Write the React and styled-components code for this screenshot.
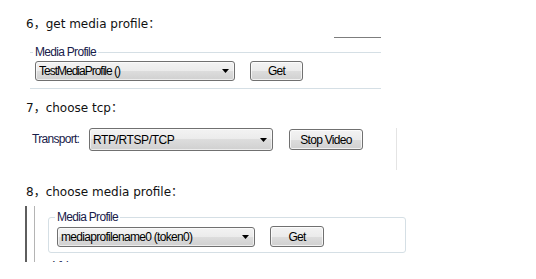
import React from "react";
import styled, { createGlobalStyle } from "styled-components";

const uiFont = `"Liberation Sans", Arial, sans-serif`;
const labelColor = "#18204a";

const Global = createGlobalStyle`
  html, body { margin: 0; padding: 0; background: #ffffff; }
  body { width: 536px; height: 279px; overflow: hidden; }
`;

const Page = styled.div`
  padding: 16px 0 0 26px;
`;

const Heading = styled.div`
  height: 16px;
  margin-top: ${(p) => p.$mt || 0}px;
  font-family: "DejaVu Sans", "Noto Sans CJK SC", sans-serif;
  font-size: 12px;
  line-height: 16px;
  color: #111111;
  white-space: nowrap;
`;

/* ---------- step 6 ---------- */
const Fig6 = styled.div`
  margin-left: 4px;
  width: 351px;
  display: flex;
  flex-direction: column;
`;

const Stub = styled.div`
  margin: 5px 0 0 auto;
  width: 47px;
  height: 1px;
  background: #7d7d7d;
`;

const LegendRow = styled.div`
  margin-top: 9px;
  height: 11px;
  display: flex;
  align-items: center;
`;

const Rule = styled.div`
  height: 1px;
  background: #d5dfe5;
  flex: ${(p) => (p.$grow ? "1 1 auto" : "0 0 3px")};
  margin-top: ${(p) => p.$mt || 0}px;
`;

const LegendText = styled.span`
  padding: 0 2px;
  font-family: ${uiFont};
  font-size: 12px;
  letter-spacing: -0.7px;
  line-height: 11px;
  color: ${labelColor};
  white-space: nowrap;
`;

const ControlsRow = styled.div`
  margin-top: ${(p) => p.$mt || 0}px;
  padding-left: ${(p) => p.$pl || 0}px;
  display: flex;
  align-items: flex-start;
  gap: ${(p) => p.$gap || 0}px;
`;

const winGradient = `linear-gradient(to bottom, #f3f3f3 0%, #ebebeb 50%, #dddddd 50%, #d0d0d0 100%)`;

const ComboBox = styled.div`
  box-sizing: border-box;
  flex: 0 0 ${(p) => p.$w}px;
  height: ${(p) => p.$h}px;
  border: 1px solid #707070;
  border-radius: 3px;
  background: ${winGradient};
  box-shadow: inset 0 0 0 1px rgba(255, 255, 255, 0.6);
  display: flex;
  align-items: center;
  padding: 0 5px 0 3px;
  font-family: ${uiFont};
  font-size: 12px;
  letter-spacing: ${(p) => p.$ls || "-0.7px"};
  color: #000000;
`;

const ComboText = styled.span`
  flex: 1 1 auto;
  white-space: nowrap;
  overflow: hidden;
`;

const Arrow = () => (
  <svg width="7" height="4" viewBox="0 0 7 4" style={{ flex: "0 0 7px" }}>
    <polygon points="0,0 7,0 3.5,4" fill="#000" />
  </svg>
);

const Button = styled.div`
  box-sizing: border-box;
  flex: 0 0 ${(p) => p.$w}px;
  height: ${(p) => p.$h}px;
  margin-top: ${(p) => p.$mt || 0}px;
  margin-left: ${(p) => p.$ml || 0}px;
  border: 1px solid #707070;
  border-radius: 3px;
  background: ${winGradient};
  box-shadow: inset 0 0 0 1px rgba(255, 255, 255, 0.7);
  display: flex;
  align-items: center;
  justify-content: center;
  font-family: ${uiFont};
  font-size: 12px;
  letter-spacing: -0.7px;
  color: #000000;
  white-space: nowrap;
`;

/* ---------- step 7 ---------- */
const FieldLabel = styled.span`
  flex: 0 0 57px;
  font-family: ${uiFont};
  font-size: 12px;
  letter-spacing: -0.7px;
  line-height: 23px;
  color: ${labelColor};
  white-space: nowrap;
`;

const Divider = styled.div`
  flex: 0 0 1px;
  height: 42px;
  margin-left: 33px;
  background: #e4e4e4;
`;

/* ---------- step 8 ---------- */
const Fig8 = styled.div`
  margin: 6px 0 0 -1px;
  height: 56px;
  overflow: hidden;
  display: flex;
  align-items: stretch;
`;

const Bar = styled.div`
  flex: 0 0 ${(p) => p.$w}px;
  margin-left: ${(p) => p.$ml || 0}px;
  background: ${(p) => p.$c};
`;

const Body8 = styled.div`
  margin-left: 13px;
  padding-top: 6px;
  display: flex;
  flex-direction: column;
`;

const GroupBox = styled.fieldset`
  box-sizing: border-box;
  width: 358px;
  min-width: 0;
  margin: 0;
  padding: 4px 8px 5px;
  border: 1px solid #d5dfe5;
  border-radius: 3px;
`;

const Legend = styled.legend`
  padding: 0 2px;
  margin-left: -2px;
  font-family: ${uiFont};
  font-size: 12px;
  letter-spacing: -0.7px;
  line-height: 11px;
  color: ${labelColor};
`;

const CutText = styled.div`
  margin: 6px 0 0 5px;
  font-family: ${uiFont};
  font-size: 12px;
  letter-spacing: -0.7px;
  line-height: 14px;
  color: ${labelColor};
`;

export default function App() {
  return (
    <>
      <Global />
      <Page>
        <Heading>6，get media profile：</Heading>
        <Fig6>
          <Stub />
          <LegendRow>
            <Rule />
            <LegendText>Media Profile</LegendText>
            <Rule $grow />
          </LegendRow>
          <ControlsRow $mt={3} $pl={5} $gap={15}>
            <ComboBox $w={200} $h={20} $ls="-1px">
              <ComboText>TestMediaProfile ()</ComboText>
              <Arrow />
            </ComboBox>
            <Button $w={53} $h={20}>Get</Button>
          </ControlsRow>
          <Rule $grow $mt={7} />
        </Fig6>

        <Heading $mt={11}>7，choose tcp：</Heading>
        <ControlsRow $mt={12} $pl={6}>
          <FieldLabel>Transport:</FieldLabel>
          <ComboBox $w={184} $h={23} $ls="-0.4px">
            <ComboText>RTP/RTSP/TCP</ComboText>
            <Arrow />
          </ComboBox>
          <Button $w={74} $h={21} $mt={1} $ml={16}>Stop Video</Button>
          <Divider />
        </ControlsRow>

        <Heading $mt={14}>8，choose media profile：</Heading>
        <Fig8>
          <Bar $w={2} $c="#5e5e5e" />
          <Bar $w={1} $ml={7} $c="#b4b4b4" />
          <Body8>
            <GroupBox>
              <Legend>Media Profile</Legend>
              <ControlsRow $gap={15}>
                <ComboBox $w={198} $h={20}>
                  <ComboText>mediaprofilename0 (token0)</ComboText>
                  <Arrow />
                </ComboBox>
                <Button $w={54} $h={21} $mt={-1}>Get</Button>
              </ControlsRow>
            </GroupBox>
            <CutText>Video</CutText>
          </Body8>
        </Fig8>
      </Page>
    </>
  );
}
